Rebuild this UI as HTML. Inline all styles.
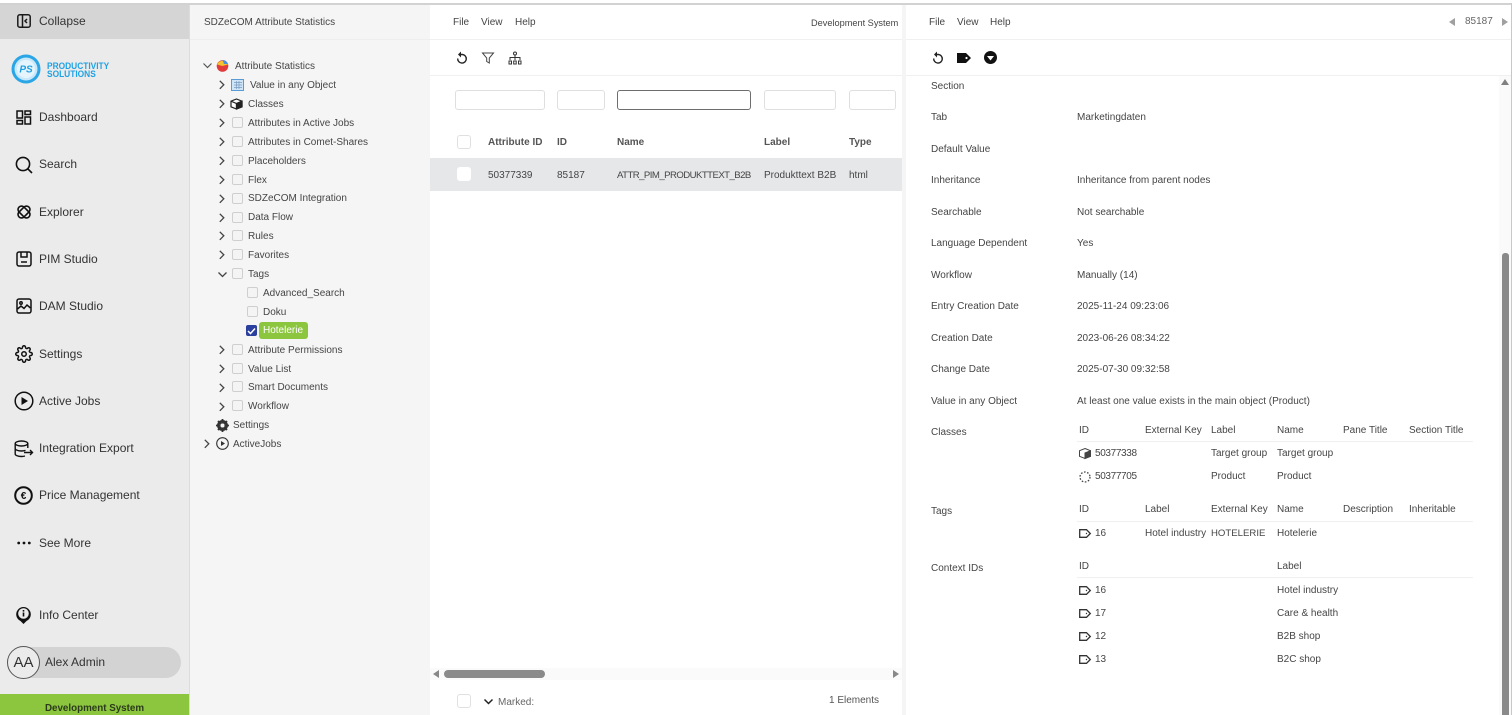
<!DOCTYPE html>
<html><head><meta charset="utf-8">
<style>
html,body{margin:0;padding:0;width:1512px;height:715px;overflow:hidden;background:#fff}
body{position:relative;font-family:"Liberation Sans","Noto Sans CJK SC",sans-serif;color:#444}
.a{position:absolute}
.t{position:absolute;white-space:nowrap;line-height:16px;height:16px;font-size:10px;color:#454545;margin-top:1px}
.n{font-size:12px;color:#333;left:39px}
.h{font-weight:bold;color:#555;font-size:10px}
.c{position:absolute;box-sizing:border-box;width:11px;height:11px;border:1px solid #cfcfcf;border-radius:2px;background:#f4f4f4}
.inp{position:absolute;box-sizing:border-box;top:90px;height:20px;border:1px solid #dfdfdf;border-radius:3px;background:#fff}
svg{position:absolute;overflow:visible}
.line{position:absolute;height:1px;background:#f0f0f0}
</style></head><body>
<!-- panels -->
<div class="a" style="left:0;top:4px;width:189px;height:711px;background:#ebebeb"></div>
<div class="a" style="left:189px;top:4px;width:1px;height:711px;background:#dcdcdc"></div>
<div class="a" style="left:0;top:4px;width:189px;height:35px;background:#d5d5d5"></div>
<div class="a" style="left:190px;top:4px;width:240px;height:711px;background:#f5f5f5"></div>
<div class="a" style="left:190px;top:39px;width:240px;height:1px;background:#eeeeee"></div>
<div class="a" style="left:902px;top:4px;width:4px;height:711px;background:#f5f5f5"></div>
<div class="a" style="left:0;top:3px;width:1512px;height:2px;background:#d2d2d2"></div>
<div class="a" style="left:1511px;top:3px;width:1px;height:712px;background:#c8c8c8"></div>
<div class="line" style="left:430px;top:39px;width:472px"></div>
<div class="line" style="left:430px;top:75px;width:472px"></div>
<div class="line" style="left:906px;top:39px;width:605px"></div>
<div class="line" style="left:906px;top:75px;width:605px"></div>

<!-- sidebar -->
<svg style="left:17px;top:14px" width="14" height="14" viewBox="0 0 14 14" fill="none" stroke="#1a1a1a" stroke-width="1.500"><rect x=".8" y=".8" width="12.400" height="12.400" rx="2"/><path d="M5.500 1v12M10 5L8 7l2 2"/></svg>
<div class="t n" style="top:12px">Collapse</div>

<svg style="left:11px;top:54px" width="30" height="30" viewBox="0 0 30 30"><circle cx="15" cy="15" r="14.500" fill="#2aa5e6"/><circle cx="15" cy="15" r="11.500" fill="#c9e8fa"/><circle cx="15" cy="15" r="9" fill="#e6f5fd"/><text x="15" y="18.500" text-anchor="middle" font-family="Liberation Sans" font-size="10" font-weight="bold" font-style="italic" fill="#1f9fe3">PS</text></svg>
<div class="t" style="left:47px;top:61px;font-size:9.500px;font-weight:bold;color:#1fa2e4;line-height:9px;height:9px;transform:scaleX(.88);transform-origin:left">PRODUCTIVITY</div>
<div class="t" style="left:47px;top:69px;font-size:9.500px;font-weight:bold;color:#1fa2e4;line-height:9px;height:9px;transform:scaleX(.88);transform-origin:left">SOLUTIONS</div>

<svg style="left:16px;top:110px" width="16" height="15" viewBox="0 0 16 15" fill="none" stroke="#111" stroke-width="1.500"><rect x="1" y="1" width="5.500" height="7"/><rect x="9" y="1" width="5.500" height="3.500"/><rect x="1" y="10.500" width="5.500" height="3.500"/><rect x="9" y="7" width="5.500" height="7"/></svg>
<div class="t n" style="top:108px">Dashboard</div>
<svg style="left:15px;top:156px" width="18" height="18" viewBox="0 0 18 18" fill="none" stroke="#111" stroke-width="1.600"><circle cx="8" cy="8" r="6.600"/><path d="M12.800 12.800L17 17"/></svg>
<div class="t n" style="top:155px">Search</div>
<svg style="left:15px;top:203px" width="18" height="18" viewBox="0 0 18 18" fill="none" stroke="#111" stroke-width="1.600"><rect x="2" y="5.500" width="14" height="7" rx="3.500" transform="rotate(45 9 9)"/><rect x="2" y="5.500" width="14" height="7" rx="3.500" transform="rotate(-45 9 9)"/></svg>
<div class="t n" style="top:203px">Explorer</div>
<svg style="left:16px;top:251px" width="16" height="16" viewBox="0 0 16 16" fill="none" stroke="#111" stroke-width="1.500"><rect x="1" y="1" width="14" height="14" rx="2"/><path d="M5 1v5h6V1M5 11h6"/></svg>
<div class="t n" style="top:250px">PIM Studio</div>
<svg style="left:16px;top:298px" width="16" height="16" viewBox="0 0 16 16" fill="none" stroke="#111" stroke-width="1.500"><rect x="1" y="1" width="14" height="14" rx="2"/><circle cx="5" cy="5" r="1.200"/><path d="M1.500 11l3.500-3 3 2.500 3-3.500 3.500 3"/></svg>
<div class="t n" style="top:297px">DAM Studio</div>
<svg style="left:15px;top:345px" width="18" height="18" viewBox="0 0 24 24" fill="none" stroke="#111" stroke-width="2"><circle cx="12" cy="12" r="3"/><path d="M19.400 15a1.650 1.650 0 0 0 .33 1.820l.06.06a2 2 0 0 1 0 2.830 2 2 0 0 1-2.830 0l-.06-.06a1.650 1.650 0 0 0-1.820-.33 1.650 1.650 0 0 0-1 1.510V21a2 2 0 0 1-2 2 2 2 0 0 1-2-2v-.09A1.650 1.650 0 0 0 9 19.400a1.650 1.650 0 0 0-1.820.33l-.06.06a2 2 0 0 1-2.830 0 2 2 0 0 1 0-2.830l.06-.06a1.650 1.650 0 0 0 .33-1.820 1.650 1.650 0 0 0-1.510-1H3a2 2 0 0 1-2-2 2 2 0 0 1 2-2h.09A1.650 1.650 0 0 0 4.600 9a1.650 1.650 0 0 0-.33-1.820l-.06-.06a2 2 0 0 1 0-2.830 2 2 0 0 1 2.830 0l.06.06a1.650 1.650 0 0 0 1.820.33H9a1.650 1.650 0 0 0 1-1.510V3a2 2 0 0 1 2-2 2 2 0 0 1 2 2v.09a1.650 1.650 0 0 0 1 1.510 1.650 1.650 0 0 0 1.820-.33l.06-.06a2 2 0 0 1 2.830 0 2 2 0 0 1 0 2.830l-.06.06a1.650 1.650 0 0 0-.33 1.820V9a1.650 1.650 0 0 0 1.510 1H21a2 2 0 0 1 2 2 2 2 0 0 1-2 2h-.09a1.650 1.650 0 0 0-1.510 1z"/></svg>
<div class="t n" style="top:345px">Settings</div>
<svg style="left:14px;top:391px" width="20" height="20" viewBox="0 0 20 20" fill="none" stroke="#111" stroke-width="1.500"><circle cx="10" cy="10" r="8.800"/><path d="M7.500 6l6.500 4-6.500 4z" fill="#111" stroke="none"/></svg>
<div class="t n" style="top:392px">Active Jobs</div>
<svg style="left:14px;top:440px" width="20" height="18" viewBox="0 0 20 18" fill="none" stroke="#111" stroke-width="1.400"><ellipse cx="7.500" cy="3.500" rx="6.300" ry="2.500"/><path d="M1.200 3.500v10.500c0 1.400 2.800 2.500 6.300 2.500 1.500 0 2.500-.2 3.500-.5M13.800 3.500V8M1.200 8.500c0 1.400 2.800 2.500 6.300 2.500 1.500 0 3-.2 4-.6M10 12.500h8.500M16 10l2.500 2.500L16 15"/></svg>
<div class="t n" style="top:439px">Integration Export</div>
<svg style="left:14px;top:486px" width="19" height="19" viewBox="0 0 19 19" fill="none" stroke="#111" stroke-width="2"><circle cx="9.500" cy="9.500" r="8.300"/><text x="9.500" y="13" text-anchor="middle" font-family="Liberation Sans" font-size="10" font-weight="bold" fill="#111" stroke="none">€</text></svg>
<div class="t n" style="top:486px">Price Management</div>
<svg style="left:17px;top:541px" width="14" height="4" viewBox="0 0 14 4" fill="#111"><circle cx="1.700" cy="2" r="1.400"/><circle cx="7" cy="2" r="1.400"/><circle cx="12.300" cy="2" r="1.400"/></svg>
<div class="t n" style="top:534px">See More</div>
<svg style="left:16px;top:606px" width="15" height="18" viewBox="0 0 15 18"><path d="M7.500 18l-3-3A7.300 7.300 0 1 1 10.500 15z" fill="#111"/><circle cx="7.500" cy="7.500" r="5.300" fill="#ebebeb"/><rect x="6.700" y="6.500" width="1.600" height="4" fill="#111"/><rect x="6.700" y="4" width="1.600" height="1.600" fill="#111"/></svg>
<div class="t n" style="top:606px">Info Center</div>
<div class="a" style="left:8px;top:647px;width:173px;height:31px;border-radius:16px;background:#d3d3d3"></div>
<div class="a" style="left:7px;top:646px;width:31px;height:31px;border:1px solid #555;border-radius:50%;background:#ebebeb;font-size:15px;line-height:31px;text-align:center;color:#333">AA</div>
<div class="t" style="left:45px;top:653px;font-size:12px;color:#333">Alex Admin</div>
<div class="a" style="left:0;top:694px;width:189px;height:21px;background:#8cc63f"></div>
<div class="t" style="left:0;width:189px;text-align:center;top:700px;font-size:9.800px;font-weight:bold;color:#2b3a1a">Development System</div>

<!-- tree -->
<div class="t" style="left:204px;top:14px">SDZeCOM Attribute Statistics</div>
<svg style="left:203px;top:63px" width="9" height="6" fill="none" stroke="#555" stroke-width="1.200"><path d="M.5 .5l4 4 4-4"/></svg>
<svg style="left:216px;top:59px" width="13" height="13" viewBox="0 0 13 13"><circle cx="6.500" cy="7" r="5.800" fill="#e23a3a"/><path d="M1 5.500A6 6 0 0 1 12 5.500L6.500 7z" fill="#f3c230"/><path d="M6.500 1A6 6 0 0 1 12 5L8 5z" fill="#4a90d9"/></svg>
<div class="t" style="left:235px;top:58px">Attribute Statistics</div>

<svg style="left:219px;top:80px" width="6" height="10" fill="none" stroke="#444" stroke-width="1.300"><path d="M.8 .8l4 4-4 4"/></svg>
<svg style="left:219px;top:99px" width="6" height="10" fill="none" stroke="#444" stroke-width="1.300"><path d="M.8 .8l4 4-4 4"/></svg>
<svg style="left:219px;top:118px" width="6" height="10" fill="none" stroke="#444" stroke-width="1.300"><path d="M.8 .8l4 4-4 4"/></svg>
<svg style="left:219px;top:137px" width="6" height="10" fill="none" stroke="#444" stroke-width="1.300"><path d="M.8 .8l4 4-4 4"/></svg>
<svg style="left:219px;top:156px" width="6" height="10" fill="none" stroke="#444" stroke-width="1.300"><path d="M.8 .8l4 4-4 4"/></svg>
<svg style="left:219px;top:175px" width="6" height="10" fill="none" stroke="#444" stroke-width="1.300"><path d="M.8 .8l4 4-4 4"/></svg>
<svg style="left:219px;top:194px" width="6" height="10" fill="none" stroke="#444" stroke-width="1.300"><path d="M.8 .8l4 4-4 4"/></svg>
<svg style="left:219px;top:213px" width="6" height="10" fill="none" stroke="#444" stroke-width="1.300"><path d="M.8 .8l4 4-4 4"/></svg>
<svg style="left:219px;top:231px" width="6" height="10" fill="none" stroke="#444" stroke-width="1.300"><path d="M.8 .8l4 4-4 4"/></svg>
<svg style="left:219px;top:250px" width="6" height="10" fill="none" stroke="#444" stroke-width="1.300"><path d="M.8 .8l4 4-4 4"/></svg>
<svg style="left:218px;top:272px" width="9" height="6" fill="none" stroke="#444" stroke-width="1.300"><path d="M.5 .5l4 4 4-4"/></svg>
<svg style="left:219px;top:345px" width="6" height="10" fill="none" stroke="#444" stroke-width="1.300"><path d="M.8 .8l4 4-4 4"/></svg>
<svg style="left:219px;top:364px" width="6" height="10" fill="none" stroke="#444" stroke-width="1.300"><path d="M.8 .8l4 4-4 4"/></svg>
<svg style="left:219px;top:383px" width="6" height="10" fill="none" stroke="#444" stroke-width="1.300"><path d="M.8 .8l4 4-4 4"/></svg>
<svg style="left:219px;top:402px" width="6" height="10" fill="none" stroke="#444" stroke-width="1.300"><path d="M.8 .8l4 4-4 4"/></svg>
<svg style="left:204px;top:439px" width="6" height="10" fill="none" stroke="#444" stroke-width="1.300"><path d="M.8 .8l4 4-4 4"/></svg>

<svg style="left:231px;top:79px" width="13" height="12" viewBox="0 0 13 12"><rect x=".5" y=".5" width="12" height="11" fill="#cfe4f7" stroke="#5a9bd4"/><path d="M3 3.500h8M3 6h8M3 8.500h8M5.500 2v8M8 2v8" stroke="#7a9cc0" stroke-width=".7"/></svg>
<svg style="left:230px;top:98px" width="13" height="12" viewBox="0 0 13 12" fill="#fff" stroke="#222" stroke-width="1.200"><path d="M6.500 1L12 3.200v5.600L6.500 11 1 8.800V3.200z"/><path d="M1 3.200l5.500 2.300L12 3.200M6.500 5.500V11" /><path d="M6.500 5.500L12 3.200v5.600L6.500 11z" fill="#222"/></svg>

<div class="t" style="left:250px;top:77px">Value in any Object</div>
<div class="t" style="left:248px;top:96px">Classes</div>
<div class="c" style="left:232px;top:117px"></div><div class="t" style="left:248px;top:115px">Attributes in Active Jobs</div>
<div class="c" style="left:232px;top:136px"></div><div class="t" style="left:248px;top:134px">Attributes in Comet-Shares</div>
<div class="c" style="left:232px;top:155px"></div><div class="t" style="left:248px;top:153px">Placeholders</div>
<div class="c" style="left:232px;top:174px"></div><div class="t" style="left:248px;top:172px">Flex</div>
<div class="c" style="left:232px;top:193px"></div><div class="t" style="left:248px;top:190px">SDZeCOM Integration</div>
<div class="c" style="left:232px;top:212px"></div><div class="t" style="left:248px;top:209px">Data Flow</div>
<div class="c" style="left:232px;top:230px"></div><div class="t" style="left:248px;top:228px">Rules</div>
<div class="c" style="left:232px;top:249px"></div><div class="t" style="left:248px;top:247px">Favorites</div>
<div class="c" style="left:232px;top:268px"></div><div class="t" style="left:248px;top:266px">Tags</div>
<div class="c" style="left:247px;top:287px"></div><div class="t" style="left:263px;top:285px">Advanced_Search</div>
<div class="c" style="left:247px;top:306px"></div><div class="t" style="left:263px;top:304px">Doku</div>
<div class="a" style="left:246px;top:325px;width:11px;height:11px;background:#2b3f9e;border-radius:2px"></div>
<svg style="left:247px;top:327px" width="9" height="8" fill="none" stroke="#fff" stroke-width="1.500"><path d="M1 4l2.500 2.500L8 1.500"/></svg>
<div class="a" style="left:259px;top:322px;width:49px;height:17px;background:#8cc63f;border-radius:3px"></div>
<div class="t" style="left:263px;top:322px;color:#fff">Hotelerie</div>
<div class="c" style="left:232px;top:344px"></div><div class="t" style="left:248px;top:342px">Attribute Permissions</div>
<div class="c" style="left:232px;top:363px"></div><div class="t" style="left:248px;top:361px">Value List</div>
<div class="c" style="left:232px;top:381px"></div><div class="t" style="left:248px;top:379px">Smart Documents</div>
<div class="c" style="left:232px;top:400px"></div><div class="t" style="left:248px;top:398px">Workflow</div>
<svg style="left:216px;top:419px" width="13" height="13" viewBox="0 0 13 13"><circle cx="6.500" cy="6.500" r="4.200" fill="none" stroke="#333" stroke-width="2.600"/><path d="M6.500 0v13M0 6.500h13M2 2l9 9M11 2l-9 9" stroke="#333" stroke-width="1.800"/><circle cx="6.500" cy="6.500" r="2" fill="#f5f5f5"/></svg>
<div class="t" style="left:233px;top:417px">Settings</div>
<svg style="left:216px;top:437px" width="13" height="13" viewBox="0 0 13 13" fill="none" stroke="#333" stroke-width="1.100"><circle cx="6.500" cy="6.500" r="5.800"/><path d="M5 4l4 2.500L5 9z" fill="#333" stroke="none"/></svg>
<div class="t" style="left:233px;top:436px">ActiveJobs</div>

<!-- middle -->
<div class="t" style="left:453px;top:14px">File</div>
<div class="t" style="left:481px;top:14px">View</div>
<div class="t" style="left:515px;top:14px">Help</div>
<div class="t" style="left:811px;top:14px;font-size:9.200px">Development System</div>
<svg style="left:456px;top:51px" width="12" height="13" viewBox="0 0 12 13" fill="none" stroke="#222" stroke-width="1.400"><path d="M3.500 3.500h3a4.300 4.300 0 1 1-4.800 4"/><path d="M5 0.500L2 3.500l3 3" fill="#222" stroke="none"/></svg>
<svg style="left:482px;top:52px" width="12" height="12" viewBox="0 0 12 12" fill="none" stroke="#444" stroke-width="1"><path d="M.5 1h11L7.300 6v5L4.700 9.500V6z"/></svg>
<svg style="left:508px;top:51px" width="14" height="14" viewBox="0 0 14 14" fill="none" stroke="#333" stroke-width="1"><circle cx="7" cy="2.500" r="1.500"/><path d="M7 4v5M2 9V6.500h10V9"/><rect x="1" y="10" width="2.500" height="3"/><rect x="5.700" y="10" width="2.500" height="3"/><rect x="10.500" y="10" width="2.500" height="3"/></svg>

<div class="inp" style="left:455px;width:90px"></div>
<div class="inp" style="left:557px;width:48px"></div>
<div class="inp" style="left:617px;width:134px;border-color:#6e6e6e"></div>
<div class="inp" style="left:764px;width:72px"></div>
<div class="inp" style="left:849px;width:47px"></div>

<div class="a" style="left:457px;top:135px;width:14px;height:14px;box-sizing:border-box;border:1px solid #e0e0e0;border-radius:3px;background:#fff"></div>
<div class="t h" style="left:488px;top:134px">Attribute ID</div>
<div class="t h" style="left:557px;top:134px">ID</div>
<div class="t h" style="left:617px;top:134px">Name</div>
<div class="t h" style="left:764px;top:134px">Label</div>
<div class="t h" style="left:849px;top:134px">Type</div>
<div class="a" style="left:430px;top:158px;width:472px;height:33px;background:#e6e7e9"></div>
<div class="a" style="left:457px;top:167px;width:14px;height:14px;border-radius:3px;background:#fff"></div>
<div class="t" style="left:488px;top:167px">50377339</div>
<div class="t" style="left:557px;top:167px">85187</div>
<div class="t" style="left:617px;top:167px;font-size:9.600px;letter-spacing:-.55px">ATTR_PIM_PRODUKTTEXT_B2B</div>
<div class="t" style="left:764px;top:167px">Produkttext B2B</div>
<div class="t" style="left:849px;top:167px">html</div>

<div class="a" style="left:430px;top:668px;width:472px;height:12px;background:#fafafa"></div>
<svg style="left:433px;top:670px" width="6" height="8" fill="#888"><path d="M6 0v8L0 4z"/></svg>
<div class="a" style="left:444px;top:670px;width:101px;height:8px;border-radius:4px;background:#8a8a8a"></div>
<svg style="left:893px;top:670px" width="6" height="8" fill="#888"><path d="M0 0v8l6-4z"/></svg>
<div class="a" style="left:457px;top:694px;width:14px;height:14px;box-sizing:border-box;border:1px solid #e0e0e0;border-radius:3px;background:#fff"></div>
<svg style="left:484px;top:699px" width="9" height="6" fill="none" stroke="#222" stroke-width="1.500"><path d="M.5 .5l4 4 4-4"/></svg>
<div class="t" style="left:498px;top:694px;color:#666">Marked:</div>
<div class="t" style="left:829px;top:692px;color:#555">1 Elements</div>

<!-- right -->
<div class="t" style="left:929px;top:14px">File</div>
<div class="t" style="left:957px;top:14px">View</div>
<div class="t" style="left:990px;top:14px">Help</div>
<svg style="left:1449px;top:18px" width="6" height="8" fill="#a0a0a0"><path d="M6 0v8L0 4z"/></svg>
<div class="t" style="left:1465px;top:13px;color:#666">85187</div>
<svg style="left:1502px;top:18px" width="6" height="8" fill="#a0a0a0"><path d="M0 0v8l6-4z"/></svg>
<svg style="left:932px;top:51px" width="12" height="13" viewBox="0 0 12 13" fill="none" stroke="#222" stroke-width="1.400"><path d="M3.500 3.500h3a4.300 4.300 0 1 1-4.800 4"/><path d="M5 0.500L2 3.500l3 3" fill="#222" stroke="none"/></svg>
<svg style="left:957px;top:53px" width="14" height="10" viewBox="0 0 14 10"><path d="M0 0h9l5 5-5 5H0z" fill="#111"/><circle cx="9.500" cy="5" r="1.100" fill="#fff"/></svg>
<svg style="left:984px;top:51px" width="13" height="13" viewBox="0 0 13 13"><circle cx="6.500" cy="6.500" r="6.500" fill="#111"/><path d="M3 5h7L6.500 9.500z" fill="#fff"/></svg>

<div class="a" style="left:0;top:1px;width:1512px;height:0">
<div class="t" style="left:931px;top:77px">Section</div>
<div class="t" style="left:931px;top:108px">Tab</div><div class="t" style="left:1077px;top:108px">Marketingdaten</div>
<div class="t" style="left:931px;top:140px">Default Value</div>
<div class="t" style="left:931px;top:171px">Inheritance</div><div class="t" style="left:1077px;top:171px">Inheritance from parent nodes</div>
<div class="t" style="left:931px;top:203px">Searchable</div><div class="t" style="left:1077px;top:203px">Not searchable</div>
<div class="t" style="left:931px;top:234px">Language Dependent</div><div class="t" style="left:1077px;top:234px">Yes</div>
<div class="t" style="left:931px;top:266px">Workflow</div><div class="t" style="left:1077px;top:266px">Manually (14)</div>
<div class="t" style="left:931px;top:297px">Entry Creation Date</div><div class="t" style="left:1077px;top:297px">2025-11-24 09:23:06</div>
<div class="t" style="left:931px;top:329px">Creation Date</div><div class="t" style="left:1077px;top:329px">2023-06-26 08:34:22</div>
<div class="t" style="left:931px;top:360px">Change Date</div><div class="t" style="left:1077px;top:360px">2025-07-30 09:32:58</div>
<div class="t" style="left:931px;top:392px">Value in any Object</div><div class="t" style="left:1077px;top:392px">At least one value exists in the main object (Product)</div>
<div class="t" style="left:931px;top:423px">Classes</div>
<div class="t" style="left:1079px;top:421px">ID</div><div class="t" style="left:1145px;top:421px">External Key</div><div class="t" style="left:1211px;top:421px">Label</div><div class="t" style="left:1277px;top:421px">Name</div><div class="t" style="left:1343px;top:421px">Pane Title</div><div class="t" style="left:1409px;top:421px">Section Title</div>
<div class="t" style="left:1095px;top:444px;letter-spacing:-.35px">50377338</div><div class="t" style="left:1211px;top:444px">Target group</div><div class="t" style="left:1277px;top:444px">Target group</div>
<div class="t" style="left:1095px;top:467px;letter-spacing:-.35px">50377705</div><div class="t" style="left:1211px;top:467px">Product</div><div class="t" style="left:1277px;top:467px">Product</div>
<div class="t" style="left:931px;top:502px">Tags</div>
<div class="t" style="left:1079px;top:500px">ID</div><div class="t" style="left:1145px;top:500px">Label</div><div class="t" style="left:1211px;top:500px">External Key</div><div class="t" style="left:1277px;top:500px">Name</div><div class="t" style="left:1343px;top:500px">Description</div><div class="t" style="left:1409px;top:500px">Inheritable</div>
<div class="t" style="left:1095px;top:524px">16</div><div class="t" style="left:1145px;top:524px">Hotel industry</div><div class="t" style="left:1211px;top:524px;font-size:9.600px">HOTELERIE</div><div class="t" style="left:1277px;top:524px">Hotelerie</div>
<div class="t" style="left:931px;top:559px">Context IDs</div>
<div class="t" style="left:1079px;top:557px">ID</div><div class="t" style="left:1277px;top:557px">Label</div>
<div class="t" style="left:1095px;top:581px">16</div><div class="t" style="left:1277px;top:581px">Hotel industry</div>
<div class="t" style="left:1095px;top:604px">17</div><div class="t" style="left:1277px;top:604px">Care &amp; health</div>
<div class="t" style="left:1095px;top:627px">12</div><div class="t" style="left:1277px;top:627px">B2B shop</div>
<div class="t" style="left:1095px;top:650px">13</div><div class="t" style="left:1277px;top:650px">B2C shop</div>
</div>

<div class="line" style="left:1077px;top:441px;width:396px"></div>
<div class="line" style="left:1077px;top:521px;width:396px"></div>
<div class="line" style="left:1077px;top:577px;width:396px"></div>
<svg style="left:1079px;top:448px" width="12" height="11" viewBox="0 0 12 11" fill="#fff" stroke="#444" stroke-width="1"><path d="M6 .5L11.500 2.700v5.600L6 10.500.5 8.300V2.700z"/><path d="M6 5L11.500 2.700v5.600L6 10.500z" fill="#444"/></svg>
<svg style="left:1079px;top:471px" width="12" height="12" viewBox="0 0 12 12" fill="none" stroke="#444" stroke-width="1.300" stroke-dasharray="1.600 1.600"><circle cx="6" cy="6" r="5"/></svg>
<svg style="left:1079px;top:529px" width="12" height="9" viewBox="0 0 12 9" fill="none" stroke="#333" stroke-width="1.300"><path d="M.7 .7h6.800l3.800 3.800-3.800 3.800H.7z"/><circle cx="7.500" cy="4.500" r=".7" fill="#333" stroke="none"/></svg>
<svg style="left:1079px;top:586px" width="12" height="9" viewBox="0 0 12 9" fill="none" stroke="#333" stroke-width="1.300"><path d="M.7 .7h6.800l3.800 3.800-3.800 3.800H.7z"/><circle cx="7.500" cy="4.500" r=".7" fill="#333" stroke="none"/></svg>
<svg style="left:1079px;top:609px" width="12" height="9" viewBox="0 0 12 9" fill="none" stroke="#333" stroke-width="1.300"><path d="M.7 .7h6.800l3.800 3.800-3.800 3.800H.7z"/><circle cx="7.500" cy="4.500" r=".7" fill="#333" stroke="none"/></svg>
<svg style="left:1079px;top:632px" width="12" height="9" viewBox="0 0 12 9" fill="none" stroke="#333" stroke-width="1.300"><path d="M.7 .7h6.800l3.800 3.800-3.800 3.800H.7z"/><circle cx="7.500" cy="4.500" r=".7" fill="#333" stroke="none"/></svg>
<svg style="left:1079px;top:655px" width="12" height="9" viewBox="0 0 12 9" fill="none" stroke="#333" stroke-width="1.300"><path d="M.7 .7h6.800l3.800 3.800-3.800 3.800H.7z"/><circle cx="7.500" cy="4.500" r=".7" fill="#333" stroke="none"/></svg>

<!-- right scrollbar -->
<div class="a" style="left:1499px;top:76px;width:12px;height:639px;background:#fafafa"></div>
<svg style="left:1501px;top:79px" width="8" height="6" fill="#808080"><path d="M0 6h8L4 0z"/></svg>
<div class="a" style="left:1502px;top:253px;width:7px;height:462px;border-radius:3px 3px 0 0;background:#8a8a8a"></div>
</body></html>
